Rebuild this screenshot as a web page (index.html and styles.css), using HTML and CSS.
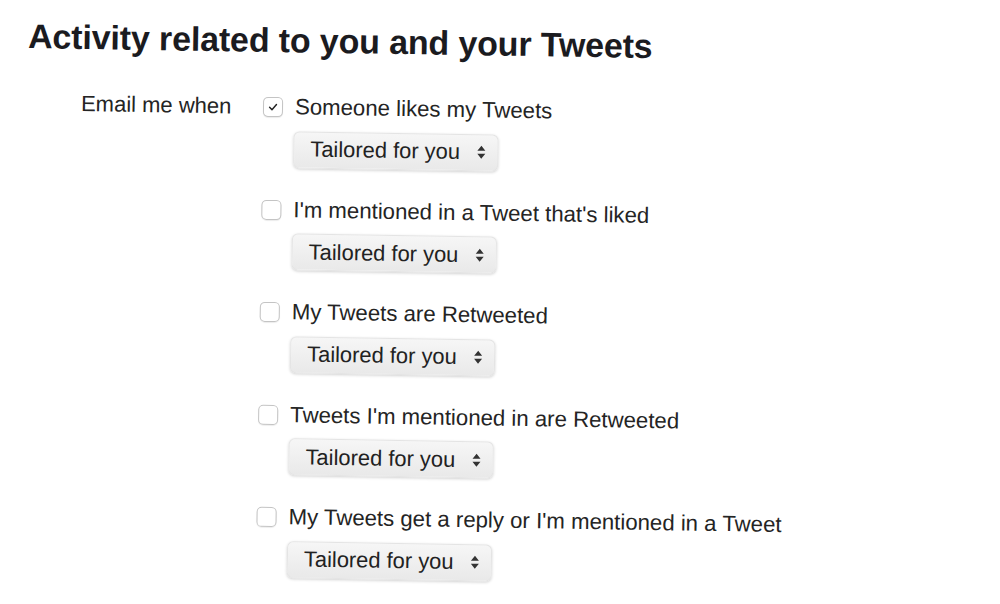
FILE: index.html
```html
<!DOCTYPE html>
<html lang="en">
<head>
<meta charset="utf-8">
<title>Email notifications</title>
<link rel="stylesheet" href="styles.css">
</head>
<body>
<div class="page">
  <h1 class="title">Activity related to you and your Tweets</h1>
  <div class="form">
    <div class="label">Email me when</div>
    <div class="options">
      <div class="option">
        <div class="check-line">
          <span class="box checked"><svg viewBox="0 0 20 20" width="20" height="20"><path d="M6.2 10.3 L8.9 13 L13.8 7.2" fill="none" stroke="#222" stroke-width="1.6" stroke-linecap="round" stroke-linejoin="round"/></svg></span>
          <span class="text">Someone likes my Tweets</span>
        </div>
        <div class="select"><span>Tailored for you</span><svg viewBox="0 0 10 16" width="10" height="16"><path d="M5 1.5 L9 6.5 L1 6.5 Z M5 14.5 L9 9.5 L1 9.5 Z" fill="#333"/></svg></div>
      </div>
      <div class="option">
        <div class="check-line">
          <span class="box"></span>
          <span class="text">I'm mentioned in a Tweet that's liked</span>
        </div>
        <div class="select"><span>Tailored for you</span><svg viewBox="0 0 10 16" width="10" height="16"><path d="M5 1.5 L9 6.5 L1 6.5 Z M5 14.5 L9 9.5 L1 9.5 Z" fill="#333"/></svg></div>
      </div>
      <div class="option">
        <div class="check-line">
          <span class="box"></span>
          <span class="text">My Tweets are Retweeted</span>
        </div>
        <div class="select"><span>Tailored for you</span><svg viewBox="0 0 10 16" width="10" height="16"><path d="M5 1.5 L9 6.5 L1 6.5 Z M5 14.5 L9 9.5 L1 9.5 Z" fill="#333"/></svg></div>
      </div>
      <div class="option">
        <div class="check-line">
          <span class="box"></span>
          <span class="text">Tweets I'm mentioned in are Retweeted</span>
        </div>
        <div class="select"><span>Tailored for you</span><svg viewBox="0 0 10 16" width="10" height="16"><path d="M5 1.5 L9 6.5 L1 6.5 Z M5 14.5 L9 9.5 L1 9.5 Z" fill="#333"/></svg></div>
      </div>
      <div class="option">
        <div class="check-line">
          <span class="box"></span>
          <span class="text">My Tweets get a reply or I'm mentioned in a Tweet</span>
        </div>
        <div class="select"><span>Tailored for you</span><svg viewBox="0 0 10 16" width="10" height="16"><path d="M5 1.5 L9 6.5 L1 6.5 Z M5 14.5 L9 9.5 L1 9.5 Z" fill="#333"/></svg></div>
      </div>
    </div>
  </div>
</div>
</body>
</html>
```
FILE: styles.css
```css
html, body {
  margin: 0;
  padding: 0;
  background: #ffffff;
}
body {
  font-family: "Liberation Sans", Arial, sans-serif;
  color: #242424;
  overflow: hidden;
}
.page {
  width: 1000px;
  height: 604px;
  padding: 22px 0 0 24px;
  box-sizing: border-box;
  transform: rotate(0.9deg);
  transform-origin: 400px 300px;
}
.title {
  margin: 0;
  font-size: 34px;
  line-height: 40px;
  font-weight: bold;
  color: #1b1b1f;
  letter-spacing: -0.15px;
}
.form {
  margin-top: 32px;
  display: grid;
  grid-template-columns: 182px auto;
  padding-left: 54px;
}
.label {
  font-size: 22px;
  line-height: 30px;
  color: #242424;
}
.options {
  display: flex;
  flex-direction: column;
}
.option {
  display: flex;
  flex-direction: column;
  align-items: flex-start;
  height: 102.5px;
}
.check-line {
  display: flex;
  align-items: center;
  height: 30px;
  gap: 12px;
}
.box {
  width: 18px;
  height: 18px;
  border: 1px solid #c4c4c4;
  border-radius: 5px;
  background: #fff;
  box-shadow: 0 1px 1px rgba(0,0,0,0.08);
  display: flex;
  align-items: center;
  justify-content: center;
  flex: none;
}
.box svg {
  display: block;
}
.text {
  font-size: 22.2px;
  line-height: 30px;
  color: #242424;
  white-space: nowrap;
}
.select {
  margin-top: 8.5px;
  margin-left: 31px;
  width: 205px;
  height: 37px;
  box-sizing: border-box;
  display: flex;
  align-items: center;
  justify-content: space-between;
  padding: 0 11px 0 16px;
  border-radius: 6px;
  background: linear-gradient(#f6f6f6, #e9e9e9);
  border: 1px solid #e4e4e4;
  box-shadow: 0 1px 3px rgba(0,0,0,0.18);
  font-size: 21.9px;
  color: #222;
}
.select svg {
  display: block;
}
```
